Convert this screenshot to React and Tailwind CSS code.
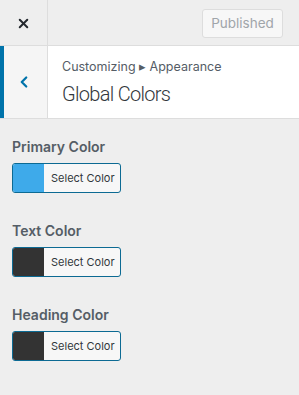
import { X, ChevronLeft } from 'lucide-react'

const colors = [
  { label: 'Primary Color', value: '#3eaaea' },
  { label: 'Text Color', value: '#333333' },
  { label: 'Heading Color', value: '#333333' },
]

function ColorControl({ label, value }) {
  return (
    <div className="mb-[28px]">
      <div className="text-[14px] leading-[20px] font-semibold text-[#555d66] mb-[6px]">{label}</div>
      <button className="flex h-[30px] w-[109px] overflow-hidden rounded-[3px] border border-[#0c6a93] bg-[#f7f7f7]">
        <span className="h-full w-[31px] shrink-0" style={{ backgroundColor: value }} />
        <span className="flex h-full items-center pl-[7px] text-[11px] text-[#32373c]">Select Color</span>
      </button>
    </div>
  )
}

export default function App() {
  return (
    <div
      className="w-[299px] h-[395px] bg-[#eeeeee] overflow-hidden"
      style={{ fontFamily: 'Inter, "Liberation Sans", sans-serif' }}
    >
      <div className="flex h-[46px] border-b border-[#dddddd]">
        <div className="flex w-[48px] items-center justify-center border-r border-[#dddddd] pt-[2px] text-[#23282d]">
          <X size={15} strokeWidth={3.2} />
        </div>
        <div className="ml-auto mr-[16px] pt-[9px]">
          <button className="h-[29px] w-[81px] rounded-[3px] border border-[#dddddd] bg-[#f7f7f7] text-[13.5px] text-[#a0a5aa]">
            Published
          </button>
        </div>
      </div>

      <div className="flex h-[73px] border-b border-[#dddddd] bg-white">
        <div className="flex w-[48px] items-center justify-center border-l-4 border-r border-l-[#0073aa] border-r-[#dddddd] bg-[#f5f5f5] pr-[3px] text-[#0073aa]">
          <ChevronLeft size={18} strokeWidth={3} />
        </div>
        <div className="flex flex-col justify-center pl-[14px]">
          <div className="text-[12.5px] leading-[18px] text-[#555d66]">Customizing ▸ Appearance</div>
          <div
            className="mt-[6px] text-[20px] leading-[24px] font-light tracking-[-0.7px] text-[#32373c]"
            style={{ fontFamily: 'Roboto, "Liberation Sans", sans-serif' }}
          >
            Global Colors
          </div>
        </div>
      </div>

      <div className="px-[12px] pt-[18px]">
        {colors.map((c) => (
          <ColorControl key={c.label} label={c.label} value={c.value} />
        ))}
      </div>
    </div>
  )
}
